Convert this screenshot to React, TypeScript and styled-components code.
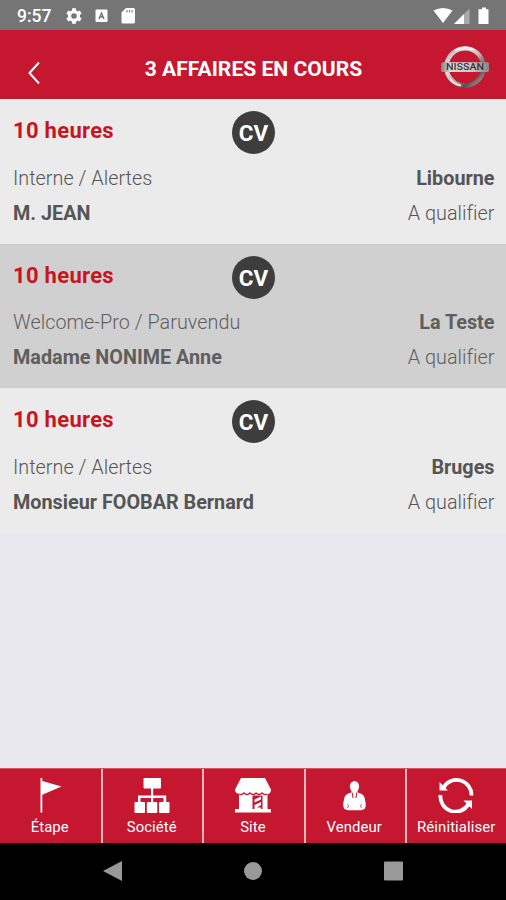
import React from "react";
import styled, { createGlobalStyle } from "styled-components";

const Global = createGlobalStyle`
  * { box-sizing: border-box; }
  body { margin: 0; background: #e8e8ef; font-family: Roboto, "Liberation Sans", sans-serif; }
  svg { display: block; }
`;

const Screen = styled.div`
  width: 506px;
  height: 900px;
  display: flex;
  flex-direction: column;
  overflow: hidden;
  background: #e8e8ee;
`;

const StatusBar = styled.div`
  height: 30px;
  flex: none;
  display: flex;
  align-items: center;
  padding: 1px 0 0 17px;
  background: #757575;
  color: #fff;
`;

const Clock = styled.span`
  width: 49px;
  font-size: 17.5px;
  font-weight: 500;
  line-height: 30px;
`;

const StatusIcons = styled.svg`
  flex: none;
`;

const Spacer = styled.div`
  flex: 1;
`;

const Header = styled.header`
  height: 69px;
  flex: none;
  display: grid;
  grid-template-columns: 69px 1fr 69px;
  align-items: center;
  background: #c5172f;
  border-bottom: 1px solid #c0202c;
`;

const BackButton = styled.button`
  border: 0;
  background: none;
  padding: 17px 0 0 26px;
  height: 69px;
`;

const Title = styled.h1`
  margin: 0;
  padding: 9px 0 0 1px;
  text-align: center;
  color: #fff;
  font-size: 21.1px;
  line-height: 26px;
  font-weight: 700;
  white-space: nowrap;
`;

const LogoSlot = styled.div`
  padding: 4px 0 0 2.5px;
`;

const Deals = styled.main`
  flex: 1;
`;

const Deal = styled.article<{ $selected?: boolean }>`
  height: 144.7px;
  padding: 10px 11.5px 0 13px;
  background: ${(p) => (p.$selected ? "#d0d0d0" : "#ebebeb")};
  border-top: 1px solid ${(p) => (p.$selected ? "#cdcdcd" : "#e9e9e9")};
  color: ${(p) => (p.$selected ? "#5e5e5e" : "#555")};
`;

const DealHead = styled.div`
  display: grid;
  grid-template-columns: 219px 43px 1fr;
  height: 50px;
`;

const Age = styled.span`
  padding-top: 8px;
  color: #c8141f;
  font-size: 22px;
  line-height: 26px;
  font-weight: 700;
  letter-spacing: 0.3px;
`;

const Badge = styled.span`
  width: 43px;
  height: 43px;
  margin-top: 1px;
  border-radius: 50%;
  background: #3d3d3d;
  color: #fff;
  font-size: 22.5px;
  line-height: 45px;
  font-weight: 700;
  text-align: center;
`;

const Line = styled.div`
  height: 35px;
  display: flex;
  justify-content: space-between;
  align-items: center;
  padding-top: 1px;
  font-size: 19.8px;
`;

const Strong = styled.span`
  font-weight: 700;
`;

const Light = styled.span`
  font-weight: 300;
  letter-spacing: 0.03px;
`;

const Tabs = styled.nav`
  height: 75px;
  flex: none;
  display: grid;
  grid-template-columns: 103px 101px 101.5px 101px 1fr;
  border-top: 1px solid #d9525f;
`;

const Tab = styled.button`
  display: flex;
  flex-direction: column;
  align-items: center;
  padding: 8px 1.5px 0 0;
  border: 0;
  border-right: 2px solid #f3b5b7;
  background: #c5172f;
  color: #fff;
  font-family: inherit;

  &:last-child {
    padding-right: 0;
    border-right: 0;
  }
`;

const TabLabel = styled.span`
  margin-top: 5px;
  font-size: 14.9px;
  line-height: 18px;
  letter-spacing: 0.1px;
`;

const AndroidNav = styled.div`
  height: 57px;
  flex: none;
  display: flex;
  justify-content: center;
  gap: 122px;
  padding-top: 18px;
  background: #000;
`;

function NissanLogo() {
  return (
    <svg width="50" height="44" viewBox="0 0 50 44">
      <defs>
        <linearGradient id="ring" x1="0" y1="0" x2="1" y2="1">
          <stop offset="0" stopColor="#8d8585" />
          <stop offset=".25" stopColor="#f2efef" />
          <stop offset=".5" stopColor="#c4bcbc" />
          <stop offset=".75" stopColor="#5b5050" />
          <stop offset="1" stopColor="#b5adad" />
        </linearGradient>
        <linearGradient id="plate" x1="0" y1="0" x2="1" y2="0">
          <stop offset="0" stopColor="#858181" />
          <stop offset=".2" stopColor="#dedada" />
          <stop offset=".65" stopColor="#c9c5c5" />
          <stop offset="1" stopColor="#8a8585" />
        </linearGradient>
      </defs>
      <circle cx="25" cy="22" r="18.6" fill="none" stroke="url(#ring)" strokeWidth="4.4" />
      <path d="M15 5.500A19.300 19.300 0 0 1 33 4.500" fill="none" stroke="#f5f2f2" strokeWidth="2" />
      <path d="M10 34A19 19 0 0 0 21 40.500" fill="none" stroke="#e5e0e0" strokeWidth="2" />
      <rect x="1" y="17.300" width="48" height="9.800" rx="1.500" fill="url(#plate)" />
      <text x="25" y="25.300" textAnchor="middle" textLength="38" lengthAdjust="spacingAndGlyphs" fontFamily="Roboto, sans-serif" fontSize="8.500" fontWeight="500" fill="#3a3535">NISSAN</text>
    </svg>
  );
}

const icons = {
  flag: (
    <svg width="34" height="36" viewBox="0 0 34 36" fill="#fff">
      <path d="M7.500 1h1.800v3L28.500 9.500 9.300 17.800V35.500H7.500z" />
    </svg>
  ),
  company: (
    <svg width="36" height="36" viewBox="0 0 36 36" fill="#fff">
      <rect x="9.500" y="1" width="17.500" height="10.500" rx="1" />
      <path d="M17 10h2.200v8.500h13V26h-2.700v-5H19.200v5H17v-5H6.500v5H4v-7.500h13z" />
      <rect x=".5" y="25" width="10.500" height="11" rx="1" />
      <rect x="12.800" y="25" width="10.500" height="11" rx="1" />
      <rect x="25" y="25" width="10.500" height="11" rx="1" />
    </svg>
  ),
  store: (
    <svg width="38" height="36" viewBox="0 0 38 36">
      <path fill="#fff" d="M7 1h24l6 11.500c0 3-1.500 4.500-3.500 4.500v15H37v3.500H1V32h4V17c-2-.3-4-1.500-4-4.500z" />
      <path fill="none" stroke="#c5172f" strokeWidth="1.300" d="M5 17q3 1.500 5-1 3 3 6 0 3 3 6 0 3 3 6 0 2.500 2.500 5 1" />
      <path fill="#c5172f" d="M18.500 18.500h10V32h-10z" />
      <path fill="#fff" d="M20.500 22.500l6.500-3v3l-6.500 3zM20.500 28l6.500-3v3l-4 2.500h4V32h-6.500z" />
    </svg>
  ),
  seller: (
    <svg width="26" height="36" viewBox="0 0 26 36">
      <ellipse cx="13.500" cy="9.500" rx="4.600" ry="5.500" fill="#fff" />
      <path fill="#fff" d="M10.500 13h6v2.500c5 1 7 3 7.700 8 .7 4 1 6-.7 8.500l-3 1.300h-14l-3-1.300c-1.700-2.500-1.400-4.500-.7-8.500.7-5 2.700-7 7.700-8z" />
      <path fill="none" stroke="#c5172f" strokeWidth="1" d="M11.200 15.500l.8 5.500M15.800 15.500l-.8 5.500" />
      <path fill="none" stroke="#c5172f" strokeWidth=".7" d="M6.500 27l1 2-1 2M20.500 27l-1 2 1 2" />
    </svg>
  ),
  reset: (
    <svg width="36" height="36" viewBox="0 0 36 36" fill="none" stroke="#fff" strokeWidth="3.800">
      <path d="M5.500 10.500a15 15 0 0 1 28 8M30.500 27A15 15 0 0 1 2.500 18" />
      <path fill="#fff" stroke="none" d="M1.500 5v8.500H10zM34 23.500h-8.500L34 32z" />
    </svg>
  ),
};

const deals = [
  { source: "Interne / Alertes", city: "Libourne", client: "M. JEAN" },
  { source: "Welcome-Pro / Paruvendu", city: "La Teste", client: "Madame NONIME Anne", selected: true },
  { source: "Interne / Alertes", city: "Bruges", client: "Monsieur FOOBAR Bernard" },
];

const tabs: { icon: keyof typeof icons; label: string }[] = [
  { icon: "flag", label: "Étape" },
  { icon: "company", label: "Société" },
  { icon: "store", label: "Site" },
  { icon: "seller", label: "Vendeur" },
  { icon: "reset", label: "Réinitialiser" },
];

export default function App() {
  return (
    <Screen>
      <Global />
      <StatusBar>
        <Clock>9:57</Clock>
        <StatusIcons width="72" height="20" viewBox="0 0 72 20">
          <circle cx="8" cy="10" r="4.400" fill="none" stroke="#fff" strokeWidth="3.200" />
          <path d="M8 2.200v3M8 14.800v3M1.300 6.100l2.600 1.500M12.100 12.400l2.600 1.500M1.300 13.900l2.600-1.500M12.100 7.600l2.600-1.500" stroke="#fff" strokeWidth="3.800" />
          <rect x="29.500" y="3.500" width="12" height="12.500" rx="1" fill="#fff" />
          <path d="M33 13l2.500-6 2.500 6M34 11h3" stroke="#757575" strokeWidth="1.400" fill="none" />
          <path d="M60 2h7.500q1.500 0 1.500 1.500v12.500q0 1.500-1.500 1.500h-10.500q-1.500 0-1.500-1.500V6.500z" fill="#fff" />
          <path d="M61 4v2.500M63.500 4v2.500M66 4v2.500" stroke="#858585" strokeWidth="1.200" />
        </StatusIcons>
        <Spacer />
        <StatusIcons width="74" height="20" viewBox="0 0 74 20">
          <path d="M1.500 4.500q9.500-5 19 0L11 17z" fill="#fff" />
          <path d="M37.500 2.500V18H22z" fill="#aaa" />
          <path d="M32 8V18H22z" fill="#fff" />
          <path d="M50 1.500h4v1.800h2.500V18h-10V3.300H50z" fill="#fff" />
        </StatusIcons>
      </StatusBar>
      <Header>
        <BackButton aria-label="Retour">
          <svg width="15" height="24" viewBox="0 0 15 24" fill="none" stroke="#fff" strokeWidth="2">
            <path d="M13 1.500L3.500 12 13 22.500" />
          </svg>
        </BackButton>
        <Title>3 AFFAIRES EN COURS</Title>
        <LogoSlot><NissanLogo /></LogoSlot>
      </Header>
      <Deals>
        {deals.map((d) => (
          <Deal key={d.client} $selected={d.selected}>
            <DealHead>
              <Age>10 heures</Age>
              <Badge>CV</Badge>
            </DealHead>
            <Line><Light>{d.source}</Light><Strong>{d.city}</Strong></Line>
            <Line><Strong>{d.client}</Strong><Light>A qualifier</Light></Line>
          </Deal>
        ))}
      </Deals>
      <Tabs>
        {tabs.map((t) => (
          <Tab key={t.label}>
            {icons[t.icon]}
            <TabLabel>{t.label}</TabLabel>
          </Tab>
        ))}
      </Tabs>
      <AndroidNav>
        <svg width="19" height="20" viewBox="0 0 19 20"><path d="M19 0v20L0 10z" fill="#999" /></svg>
        <svg width="18" height="20" viewBox="0 0 18 20"><circle cx="9" cy="10" r="9" fill="#999" /></svg>
        <svg width="19" height="20" viewBox="0 0 19 20"><rect y=".5" width="19" height="19" rx="1" fill="#999" /></svg>
      </AndroidNav>
    </Screen>
  );
}
